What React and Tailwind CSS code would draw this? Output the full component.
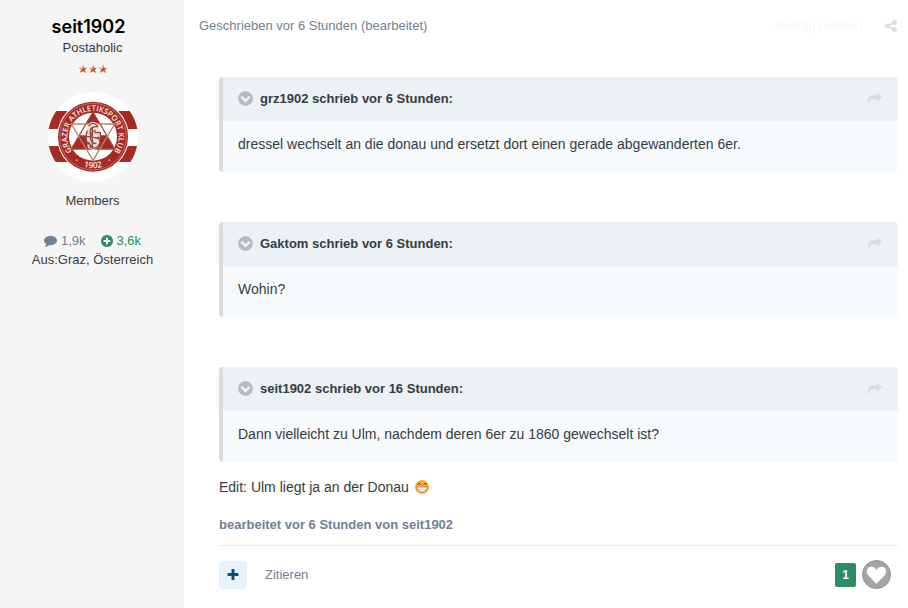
import React from 'react';

const CIRCLE = 'm0 0q0 209-103 385.5t-279.5 279.5-385.5 103-385.5-103-279.5-279.5-103-385.5 103-385.5 279.5-279.5 385.5-103 385.5 103 279.5 279.5 103 385.5z';

const ICONS = {
  comment: 'M1792 896q0 174-120 321.5t-326 233-450 85.5q-70 0-145-8-198 175-460 242-49 14-114 22-17 2-30.5-9t-17.5-29v-1q-3-4-.5-12t2-10 4.5-9.5l6-9 7-8.5 8-9q7-8 31-34.5t34.5-38 31-39.5 32.5-51 27-59 26-76q-157-89-247.5-220t-90.5-281q0-130 71-248.5t191-204.5 286-136.5 348-50.5q244 0 450 85.5t326 233 120 321.5z',
  plusCircle: `M1344 960v-128q0-26-19-45t-45-19h-256v-256q0-26-19-45t-45-19h-128q-26 0-45 19t-19 45v256h-256q-26 0-45 19t-19 45v128q0 26 19 45t45 19h256v256q0 26 19 45t45 19h128q26 0 45-19t19-45v-256h256q26 0 45-19t19-45zM1664 896${CIRCLE}`,
  chevronCircle: `M941 1299l454-454q19-19 19-45t-19-45l-102-102q-19-19-45-19t-45 19l-307 307-307-307q-19-19-45-19t-45 19l-102 102q-19 19-19 45t19 45l454 454q19 19 45 19t45-19zM1664 896${CIRCLE}`,
  share: 'M1792 640q0 26-19 45l-512 512q-19 19-45 19t-45-19-19-45v-256h-224q-98 0-175.5 6t-154 21.5-133 42.5-105.5 69.5-80 101-48.5 138.5-17.5 181q0 55 5 123 0 6 2.5 23.5t2.5 26.5q0 15-8.5 25t-23.5 10q-16 0-28-17-7-9-13-22t-13.5-30-10.5-24q-127-285-127-451 0-199 53-333 162-403 875-403h224v-256q0-26 19-45t45-19 45 19l512 512q19 19 19 45z',
  shareAlt: 'M1344 1024q133 0 226.5 93.5t93.5 226.5-93.5 226.5-226.5 93.5-226.5-93.5-93.5-226.5q0-12 2-34l-360-180q-92 86-218 86-133 0-226.5-93.5t-93.5-226.5 93.5-226.5 226.5-93.5q126 0 218 86l360-180q-2-22-2-34 0-133 93.5-226.5t226.5-93.5 226.5 93.5 93.5 226.5-93.5 226.5-226.5 93.5q-126 0-218-86l-360 180q2 22 2 34t-2 34l360 180q92-86 218-86z',
  plus: 'M1600 736v192q0 40-28 68t-68 28h-416v416q0 40-28 68t-68 28h-192q-40 0-68-28t-28-68v-416h-416q-40 0-68-28t-28-68v-192q0-40 28-68t68-28h416v-416q0-40 28-68t68-28h192q40 0 68 28t28 68v416h416q40 0 68 28t28 68z',
};

const Icon = ({ name, className }) => (
  <svg viewBox="0 0 1792 1792" fill="currentColor" fillRule="evenodd" className={className} aria-hidden="true">
    <path d={ICONS[name]} />
  </svg>
);

const quotes = [
  { author: 'grz1902', when: 'vor 6 Stunden', text: 'dressel wechselt an die donau und ersetzt dort einen gerade abgewanderten 6er.' },
  { author: 'Gaktom', when: 'vor 6 Stunden', text: 'Wohin?' },
  { author: 'seit1902', when: 'vor 16 Stunden', text: 'Dann vielleicht zu Ulm, nachdem deren 6er zu 1860 gewechselt ist?' },
];

const Star = () => (
  <svg viewBox="0 0 20 20" className="w-[10px] h-[10px]" aria-hidden="true">
    <path d="M11 1l1 6 7 0-5 5 3 7-7-4-7 4 3-7-5-5h7z" fill="#f3c3ad" />
    <path d="M11 3l1 5h5l-4 4 3 6-6-4-6 3 3-6-4-3h6z" fill="#bf5228" />
    <path d="M10 3l-1 6-7-1" fill="none" stroke="#f7b79b" strokeWidth="2" />
  </svg>
);

const ClubAvatar = () => (
  <svg viewBox="0 0 270 270" className="w-[90px] h-[90px] rounded-full" role="img" aria-label="seit1902">
    <rect width="270" height="270" fill="#fff" />
    <path d="M0 57h270v54H0zM0 162h270v48H0z" fill="#a52a24" />
    <circle cx="135" cy="134" r="108" fill="#fff" />
    <circle cx="135" cy="134" r="105" fill="#a52a24" />
    <circle cx="135" cy="134" r="100" fill="none" stroke="#cf8d84" strokeWidth="2" />
    <circle cx="135" cy="134" r="72" fill="#fff" />
    {/* hexagram */}
    <path d="M135 60L156 96H114zM95 130H175L200 171H70z" fill="#a52a24" />
    <path d="M135 60L200 171H70z" fill="none" stroke="#a94438" strokeWidth="4" />
    <path d="M70 96H200L135 205z" fill="none" stroke="#b98070" strokeWidth="4" />
    {/* monogram */}
    <path d="M121 96q14-14 28 0l10 28-8 42-16 10-16-10-6-42z" fill="#ecdcd4" />
    <path
      d="M122 102q13-16 26 0M118 116q-9 22 3 42M151 104q-24-2-25 15t24 20q13 10-2 26-13 9-24-3M144 116q-17 2-17 20t18 19M133 104v66M139 122h18v15h-14M116 134h18M121 150l13 18"
      fill="none" stroke="#8f4a40" strokeWidth="4"
    />
    <path id="club-top" d="M77.500 185A77 77 0 1 1 192.500 185" fill="none" />
    <text fill="#f8ebe7" fontSize="23" fontWeight="600" className="font-['Open_Sans',sans-serif]">
      <textPath href="#club-top" startOffset="50%" textAnchor="middle">GRAZER ATHLETIKSPORT KLUB</textPath>
    </text>
    <path id="club-bottom" d="M55 184A94 94 0 0 0 215 184" fill="none" />
    <text fill="#f8ebe7" fontSize="25" fontWeight="600" className="font-['Open_Sans',sans-serif]">
      <textPath href="#club-bottom" startOffset="50%" textAnchor="middle">1902</textPath>
    </text>
    <circle cx="86" cy="205" r="3" fill="#d9a096" />
    <circle cx="184" cy="205" r="3" fill="#d9a096" />
  </svg>
);

const GrinEmoji = () => (
  <svg viewBox="0 0 42 42" className="w-[14px] h-[14px]" role="img" aria-label="Grinsen">
    <circle cx="21" cy="21" r="21" fill="#fbad32" />
    <path d="M7 14q5-8 10 0M25 14q5-8 10 0" fill="none" stroke="#4a3d38" strokeWidth="3" />
    <path d="M6 21h30q1 15-15 15T6 21z" fill="#fff" stroke="#b35a62" strokeWidth="2" />
    <path d="M8 29h26" stroke="#b99aa5" strokeWidth="2" />
  </svg>
);

const Quote = ({ author, when, text }) => (
  <blockquote className="overflow-hidden rounded border-l-4 border-[#d8dde0] bg-[#f6fafd]">
    <div className="flex h-11 items-center bg-[#ecf1f5] pb-px pl-[14px] pr-4">
      <button type="button" aria-label="Zitat einklappen" className="text-[#b5babd]">
        <Icon name="chevronCircle" className="h-[17px] w-[17px]" />
      </button>
      <cite className="ml-[6px] grow text-[13px] font-bold not-italic leading-5 text-[#353c41]">
        {author} schrieb {when}:
      </cite>
      <a href="#beitrag" aria-label="Zum Beitrag" className="text-[#d8dde1]">
        <Icon name="share" className="h-[14px] w-[14px]" />
      </a>
    </div>
    <p className="px-[15px] pt-3 pb-[17px] text-sm leading-[22px]">{text}</p>
  </blockquote>
);

const AuthorPanel = () => (
  <aside className="flex w-[184px] shrink-0 flex-col items-center bg-[#f5f5f5] pl-px pt-4 text-[13px] leading-5">
    <h3 className="pr-2 font-['Inter',sans-serif] text-lg font-semibold leading-[22px] text-black">
      <a href="#profil">seit1902</a>
    </h3>
    <p>Postaholic</p>
    <div className="mt-[6px] flex">
      <Star />
      <Star />
      <Star />
    </div>
    <a href="#profil" className="mt-[18px]">
      <ClubAvatar />
    </a>
    <p className="mt-[9px]">Members</p>
    <ul className="mt-5 flex gap-[14px] leading-[19px]">
      <li className="flex items-center gap-1 text-[#718096]">
        <Icon name="comment" className="h-[13px] w-[13px]" />
        1,9k
      </li>
      <li className="flex items-center gap-[3px] text-[#2b8c68]">
        <Icon name="plusCircle" className="h-[14px] w-[14px]" />
        3,6k
      </li>
    </ul>
    <p>Aus:Graz, Österreich</p>
  </aside>
);

export default function App() {
  return (
    <article className="flex min-h-screen bg-white font-['Liberation_Sans',Arial,sans-serif] text-[#353c41]">
      <AuthorPanel />
      <div className="min-w-0 grow pl-[15px] pr-[10px] pt-4">
        <header className="flex items-center text-[13px] leading-5">
          <a href="#beitrag" className="text-[#718096]">Geschrieben vor 6 Stunden (bearbeitet)</a>
          <a href="#melden" className="ml-auto text-[#f7f7f9]">Beitrag melden</a>
          <button type="button" aria-label="Teilen" className="ml-[22px] pb-px text-[#dcdfe8]">
            <Icon name="shareAlt" className="h-[14px] w-[14px]" />
          </button>
        </header>

        <div className="pl-5 pt-[41px]">
          <div className="flex flex-col gap-[50px]">
            {quotes.map((quote) => (
              <Quote key={quote.author} {...quote} />
            ))}
          </div>
          <p className="mt-[14px] flex items-center gap-[6px] text-sm leading-[22px]">
            Edit: Ulm liegt ja an der Donau <GrinEmoji />
          </p>
          <p className="mt-[17px] text-[13px] font-bold leading-5 text-[#718096]">
            bearbeitet vor 6 Stunden von seit1902
          </p>

          <footer className="mt-[10px] flex items-center border-t border-[#e8eaeb] pt-[14px] pr-[7px] text-[13px]">
            <button type="button" aria-label="Multi-Zitat" className="flex h-7 w-7 items-center justify-center rounded bg-[#e8f2fa] text-[#0f4b78]">
              <Icon name="plus" className="h-[14px] w-[14px]" />
            </button>
            <button type="button" className="ml-[18px] text-[#718096]">Zitieren</button>
            <span className="ml-auto flex h-6 w-[21px] items-center justify-center rounded-xs bg-[#2b8c68] text-xs font-bold text-white">
              1
            </span>
            <button type="button" aria-label="Gefällt mir" className="ml-[6px]">
              <svg viewBox="0 0 87 87" className="h-[29px] w-[29px]" aria-hidden="true">
                <circle cx="43.500" cy="43.500" r="42" fill="#a5a5a5" stroke="#8f8f8f" strokeWidth="3" />
                <path d="M43 71L20 47C8 32 17 20 28 20c8 0 13 5 15 10 3-5 8-10 16-10 11 0 20 12 8 27z" fill="#fff" />
              </svg>
            </button>
          </footer>
        </div>
      </div>
    </article>
  );
}
